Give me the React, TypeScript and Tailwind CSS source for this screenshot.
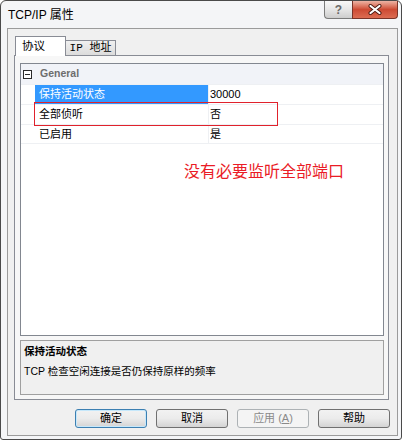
import React from "react";

type Row = { label: string; value: string; selected?: boolean };

const rows: Row[] = [
  { label: "保持活动状态", value: "30000", selected: true },
  { label: "全部侦听", value: "否" },
  { label: "已启用", value: "是" },
];

function CaptionButtons() {
  return (
    <div className="flex">
      <div className="flex h-[18px] w-[28px] items-center justify-center rounded-bl-[4px] border border-t-0 border-r-0 border-[#7b7b7b] bg-linear-to-b from-[#f8f8f8] via-[#e6e6e6] to-[#cdcdcd]">
        <span className="text-[12px] font-bold leading-none text-[#6a6a6a]">?</span>
      </div>
      <div className="flex h-[18px] w-[46px] items-center justify-center rounded-br-[4px] border border-t-0 border-[#7a3428] bg-linear-to-b from-[#ecb3a4] via-[#cd4a33] to-[#dc6c52]">
        <svg width="14" height="11" viewBox="0 0 14 11">
          <path d="M2.5 2 L11.5 9 M11.5 2 L2.5 9" stroke="#4b1a12" strokeWidth="4" strokeLinecap="round" />
          <path d="M2.5 2 L11.5 9 M11.5 2 L2.5 9" stroke="#ffffff" strokeWidth="2.2" strokeLinecap="round" />
        </svg>
      </div>
    </div>
  );
}

function PropertyRow({ row, last }: { row: Row; last: boolean }) {
  return (
    <div className={`flex h-[20px] border-t border-[#eef0f3] ${last ? "border-b" : ""}`}>
      <div className="w-[14px] shrink-0 bg-white" />
      <div
        className={`flex w-[173px] shrink-0 items-center pl-[4px] text-[11px] ${
          row.selected ? "bg-[#3399ff] text-white" : "bg-white text-black"
        }`}
      >
        {row.label}
      </div>
      <div className="flex flex-1 items-center border-l border-[#eef0f3] pl-[1px] text-[11px]">{row.value}</div>
    </div>
  );
}

export default function App() {
  return (
    <div className="h-[443px] w-[405px] bg-white font-['Liberation_Sans','Noto_Sans_CJK_SC',sans-serif] text-black">
      <div className="flex h-[440px] w-[402px] flex-col rounded-t-[6px] rounded-b-[3px] border border-[#4a4a4a] bg-[#f4f5f7]">
        <div className="flex h-[27px] justify-between">
          <span className="self-center pl-[7px] text-[12px] leading-[14px]">TCP/IP 属性</span>
          <div className="mr-[3px]">
            <CaptionButtons />
          </div>
        </div>

        <div className="mb-[3px] ml-[6px] mr-[3px] flex flex-1 flex-col border border-[#9b9b9b] bg-[#f0f0f0]">
          <div className="ml-[7px] mt-[7px] flex h-[19px] items-end">
            <div className="relative z-10 -mb-px flex h-[20px] w-[51px] items-center border border-b-0 border-[#898c95] bg-white pl-[6px] text-[11.5px]">
              协议
            </div>
            <div className="flex h-[15px] w-[50px] items-center justify-center border border-b-0 border-l-0 border-[#898c95] bg-linear-to-b from-[#f0f0f0] to-[#dcdcdc] text-[11px] font-['Liberation_Mono','Noto_Sans_CJK_SC',monospace]">
              IP 地址
            </div>
          </div>

          <div className="ml-[6px] flex h-[345px] w-[375px] flex-col border border-[#898c95] bg-[#f7f7f7] pl-[5px] pt-[7px]">
            <div className="relative h-[273px] w-[364px] border border-[#828790] bg-white">
              <div className="flex h-[20px] items-center bg-[#f1f3f8]">
                <div className="ml-[2px] flex h-[9px] w-[9px] items-center justify-center border border-[#2a2a2a] bg-white">
                  <div className="h-px w-[5px] bg-[#2a2a2a]" />
                </div>
                <span className="ml-[8px] text-[10.5px] font-bold text-[#6d6d6d]">General</span>
              </div>
              {rows.map((row, i) => (
                <PropertyRow key={row.label} row={row} last={i === rows.length - 1} />
              ))}

              <div className="absolute left-[13px] top-[38px] h-[24px] w-[244px] border border-[#e0222c]" />
              <span className="absolute left-[163px] top-[100px] text-[16px] leading-none text-[#ea1c26]">
                没有必要监听全部端口
              </span>
            </div>

            <div className="mt-[4px] h-[55px] w-[364px] border border-[#a0a0a0] bg-[#f0f0f0] px-[3px] pt-[3px]">
              <div className="text-[10.5px] font-bold leading-[14px]">保持活动状态</div>
              <div className="mt-[6px] text-[10.5px] leading-[14px]">TCP 检查空闲连接是否仍保持原样的频率</div>
            </div>
          </div>

          <div className="mt-[9px] flex justify-end gap-[9px] pr-[7px]">
            <div className="flex h-[19px] w-[72px] items-center justify-center rounded-[3px] border border-[#3c7fb1] bg-linear-to-b from-[#f2f2f2] via-[#ebebeb] to-[#d4d4d4] text-[11px] shadow-[inset_0_0_0_1px_#c6e8fb]">
              确定
            </div>
            <div className="flex h-[19px] w-[72px] items-center justify-center rounded-[3px] border border-[#707070] bg-linear-to-b from-[#f2f2f2] via-[#ebebeb] to-[#d4d4d4] text-[11px]">
              取消
            </div>
            <div className="flex h-[19px] w-[72px] items-center justify-center rounded-[3px] border border-[#adb2b5] bg-[#f4f4f4] text-[11px] text-[#8a8a8a]">
              应用 (<u>A</u>)
            </div>
            <div className="flex h-[19px] w-[72px] items-center justify-center rounded-[3px] border border-[#707070] bg-linear-to-b from-[#f2f2f2] via-[#ebebeb] to-[#d4d4d4] text-[11px]">
              帮助
            </div>
          </div>
        </div>
      </div>
    </div>
  );
}
